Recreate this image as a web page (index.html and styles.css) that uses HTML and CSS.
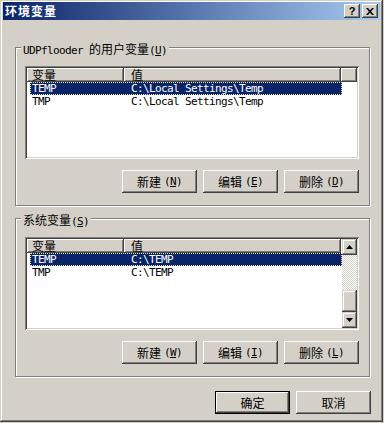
FILE: index.html
```html
<!DOCTYPE html>
<html lang="zh-CN">
<head>
  <meta charset="UTF-8">
  <title>环境变量</title>
  <link rel="stylesheet" href="styles.css">
</head>
<body>
  <div class="window">
    <div class="titlebar">
      <span class="title">环境变量</span>
      <div class="caption-btns">
        <span class="cap-btn help">?</span>
        <span class="cap-btn close">
          <svg width="8" height="7" viewBox="0 0 8 7"><path d="M0 0h2l2 2.3L6 0h2L5 3.5 8 7H6L4 4.7 2 7H0l3-3.5z" fill="#000"/></svg>
        </span>
      </div>
    </div>

    <div class="dialog-body">
      <!-- user variables -->
      <fieldset class="group">
        <legend><span class="lat">UDPflooder </span>的用户变量<span class="lat">(<u>U</u>)</span></legend>
        <div class="group-inner">
          <div class="listview">
            <div class="lv-header">
              <div class="col col-name">变量</div>
              <div class="col col-value">值</div>
              <div class="col col-fill"></div>
            </div>
            <div class="lv-rows">
              <div class="lv-row selected"><span class="cell-name lat">TEMP</span><span class="cell-value lat">C:\Local Settings\Temp</span></div>
              <div class="lv-row"><span class="cell-name lat">TMP</span><span class="cell-value lat">C:\Local Settings\Temp</span></div>
            </div>
          </div>
          <div class="btn-row">
            <button class="btn">新建<span class="lat key">(<u>N</u>)</span></button>
            <button class="btn">编辑<span class="lat key">(<u>E</u>)</span></button>
            <button class="btn">删除<span class="lat key">(<u>D</u>)</span></button>
          </div>
        </div>
      </fieldset>

      <!-- system variables -->
      <fieldset class="group second">
        <legend>系统变量<span class="lat">(<u>S</u>)</span></legend>
        <div class="group-inner">
          <div class="listview with-scroll">
            <div class="lv-main">
              <div class="lv-header">
                <div class="col col-name">变量</div>
                <div class="col col-value">值</div>
              </div>
              <div class="lv-rows">
                <div class="lv-row selected"><span class="cell-name lat">TEMP</span><span class="cell-value lat">C:\TEMP</span></div>
                <div class="lv-row"><span class="cell-name lat">TMP</span><span class="cell-value lat">C:\TEMP</span></div>
              </div>
            </div>
            <div class="scrollbar">
              <div class="sb-btn">
                <svg width="7" height="4" viewBox="0 0 7 4"><path d="M3.5 0L7 4H0z" fill="#000"/></svg>
              </div>
              <div class="sb-track"></div>
              <div class="sb-thumb"></div>
              <div class="sb-btn">
                <svg width="7" height="4" viewBox="0 0 7 4"><path d="M0 0h7L3.5 4z" fill="#000"/></svg>
              </div>
            </div>
          </div>
          <div class="btn-row">
            <button class="btn">新建<span class="lat key">(<u>W</u>)</span></button>
            <button class="btn">编辑<span class="lat key">(<u>I</u>)</span></button>
            <button class="btn">删除<span class="lat key">(<u>L</u>)</span></button>
          </div>
        </div>
      </fieldset>

      <div class="dialog-buttons">
        <button class="btn default">确定</button>
        <button class="btn">取消</button>
      </div>
    </div>
  </div>
</body>
</html>
```

FILE: styles.css
```css
body {
  margin: 0;
  background: #d4d0c8;
  font-family: "Noto Sans CJK SC", sans-serif;
  font-size: 12px;
  color: #000;
}
.lat {
  font-family: "DejaVu Sans Mono", monospace;
  font-size: 11px;
  letter-spacing: -0.62px;
}
.window {
  width: 383px;
  height: 422px;
  box-sizing: border-box;
  padding: 2px 3px 3px;
  background: #d4d0c8;
  box-shadow: inset -1px -1px #404040, inset 1px 1px #d4d0c8, inset -2px -2px #808080, inset 2px 2px #fff;
}
.titlebar {
  height: 18px;
  display: flex;
  align-items: center;
  justify-content: space-between;
  padding: 0 2px;
  background: linear-gradient(to right, #0a246a, #a6caf0);
}
.title {
  color: #fff;
  font-weight: bold;
  letter-spacing: 1px;
  line-height: 18px;
}
.caption-btns {
  display: flex;
  gap: 2px;
}
.cap-btn {
  width: 16px;
  height: 14px;
  display: flex;
  align-items: center;
  justify-content: center;
  background: #d4d0c8;
  box-shadow: inset -1px -1px #404040, inset 1px 1px #fff, inset -2px -2px #808080;
}
.cap-btn.help {
  font-family: "Liberation Sans", sans-serif;
  font-weight: bold;
  font-size: 11px;
  line-height: 14px;
}
.dialog-body {
  padding: 18px 10px 0 12px;
}
.group {
  margin: 0;
  padding: 0;
  min-width: 0;
  border: 1px solid #808080;
  box-shadow: inset 1px 1px #fff, 1px 1px #fff;
}
.group.second {
  margin-top: 3px;
}
.group legend {
  margin-left: 5px;
  padding: 5px 2px 0;
  line-height: 12px;
  background: #d4d0c8;
}
.group-inner {
  padding: 9px 10px 12px 9px;
}
.listview {
  height: 93px;
  box-sizing: border-box;
  padding: 2px;
  background: #fff;
  box-shadow: inset 1px 1px #808080, inset -1px -1px #fff, inset 2px 2px #404040, inset -2px -2px #d4d0c8;
}
.with-scroll {
  display: flex;
}
.lv-main {
  flex: 1;
}
.lv-header {
  display: flex;
  height: 14px;
}
.col {
  box-sizing: border-box;
  line-height: 14px;
  background: #d4d0c8;
  box-shadow: inset -1px -1px #404040, inset 1px 1px #fff, inset -2px -2px #808080;
}
.col-name {
  width: 97px;
  padding-left: 5px;
}
.col-value {
  width: 217px;
  padding-left: 7px;
}
.col-fill {
  flex: 1;
}
.lv-row {
  display: flex;
  width: 312px;
  height: 13px;
  margin-left: 3px;
  line-height: 13px;
  white-space: nowrap;
}
.lv-row.selected {
  background: #0a246a;
  color: #fff;
  outline: 1px dotted #e8e4a0;
  outline-offset: -1px;
}
.cell-name {
  width: 94px;
  padding-left: 2px;
  box-sizing: border-box;
}
.cell-value {
  padding-left: 7px;
}
.scrollbar {
  width: 16px;
  display: flex;
  flex-direction: column;
}
.sb-btn, .sb-thumb {
  background: #d4d0c8;
  box-shadow: inset -1px -1px #404040, inset 1px 1px #d4d0c8, inset -2px -2px #808080, inset 2px 2px #fff;
}
.sb-btn {
  height: 16px;
  display: flex;
  align-items: center;
  justify-content: center;
}
.sb-track {
  flex: 1;
  background: repeating-conic-gradient(#d4d0c8 0 25%, #fff 0 50%) 0 0 / 2px 2px;
}
.sb-thumb {
  height: 22px;
}
.btn-row, .dialog-buttons {
  display: flex;
  justify-content: flex-end;
  gap: 6px;
}
.btn-row {
  margin-top: 11px;
}
.dialog-buttons {
  margin-top: 14px;
  margin-right: -1px;
}
.btn {
  width: 75px;
  height: 23px;
  padding: 0;
  border: none;
  display: flex;
  align-items: center;
  justify-content: center;
  background: #d4d0c8;
  font-family: "Noto Sans CJK SC", sans-serif;
  font-size: 12px;
  color: #000;
  box-shadow: inset -1px -1px #404040, inset 1px 1px #fff, inset -2px -2px #808080, inset 2px 2px #d4d0c8;
}
.btn.default {
  box-shadow: inset 0 0 0 1px #000, inset -2px -2px #404040, inset 2px 2px #fff, inset -3px -3px #808080;
}
.key {
  margin-left: 3px;
}
```
